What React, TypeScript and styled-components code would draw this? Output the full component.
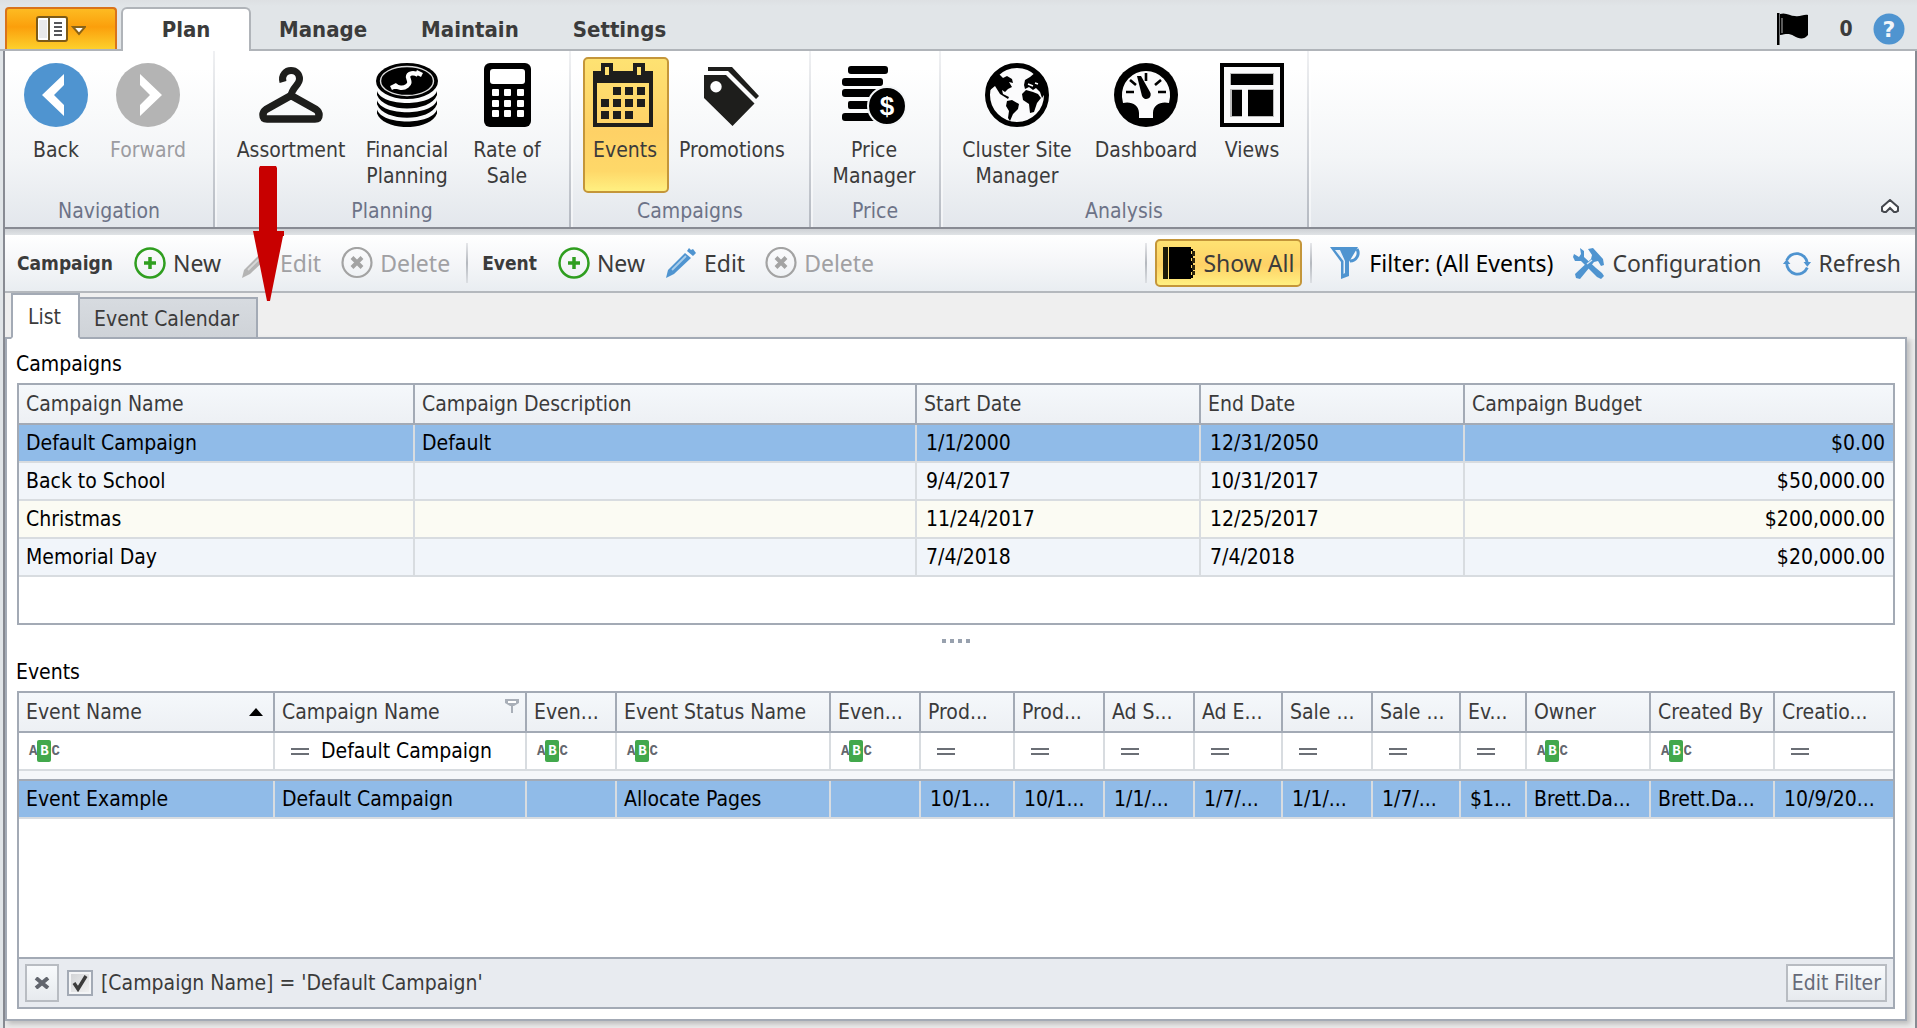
import React from "react";
import styled, { createGlobalStyle, css } from "styled-components";

const uiFont = `"DejaVu Sans Condensed", "DejaVu Sans", sans-serif`;
const barFont = `"Noto Sans", "Open Sans", sans-serif`;
const ink = "#3b3b3b";
const line = "#a3aab5";
const blue = "#4f94d0";
const edge = "#888b93";

const GlobalStyle = createGlobalStyle`
  * { box-sizing: border-box; }
  body { margin: 0; background: #e1e5e8; }
  button, input { font: inherit; color: inherit; margin: 0; }
  button { cursor: pointer; }
  svg { display: block; flex: none; }
`;

const Shell = styled.div`
  position: relative;
  display: flex;
  flex-direction: column;
  min-height: 100vh;
  font: 21px/26px ${uiFont};
  color: ${ink};
  white-space: nowrap;
`;

/* ---------- title row ---------- */

const TitleRow = styled.header`
  display: flex;
  align-items: flex-end;
  height: 51px;
  padding: 0 12px 0 5px;
  background: linear-gradient(#dde0e3, #e1e5e8 6px);
  box-shadow: inset 0 -2px #b0b4b9;
`;

const AppButton = styled.button`
  display: flex;
  align-items: center;
  justify-content: center;
  gap: 4px;
  width: 112px;
  height: 42px;
  margin: 0 4px 2px 0;
  padding: 0;
  border: 2px solid #d9731a;
  border-bottom: 0;
  border-radius: 4px 4px 0 0;
  background: linear-gradient(#fdbb22, #fb9f0b 45%, #fdd02c);
`;

const RibbonTabs = styled.nav`
  display: flex;
  flex: 1;
  gap: 2px;
`;

const RibbonTab = styled.button<{ $active?: boolean }>`
  height: 44px;
  padding: 2px 26px 0;
  border: 0;
  background: none;
  font-size: 22px;
  font-weight: bold;
  ${(p) =>
    p.$active &&
    css`
      min-width: 130px;
      padding-top: 0;
      border: 2px solid #b0b4b9;
      border-bottom: 0;
      border-radius: 6px 6px 0 0;
      background: #fff;
    `}
`;

const StatusArea = styled.div`
  display: flex;
  align-items: center;
  align-self: flex-start;
  padding-top: 13px;
`;

const StatusCount = styled.span`
  width: 64px;
  padding-left: 10px;
  text-align: center;
  font-weight: bold;
`;

const PlainButton = styled.button`
  padding: 0;
  border: 0;
  background: none;
`;

/* ---------- ribbon ---------- */

const Frame = styled.div`
  display: flex;
  flex-direction: column;
  flex: 1;
  margin-left: 3px;
  border: solid ${edge};
  border-width: 0 2px;
  background: #ebebeb;
`;

const RibbonBar = styled.div`
  display: flex;
  height: 178px;
  border-bottom: 2px solid ${edge};
  background: linear-gradient(#fff 10%, #f3f5f7 60%, #e3e7ec);
`;

const RibbonGroup = styled.section`
  display: flex;
  flex-direction: column;
  padding: 6px 12px 0;
  border-right: 2px solid;
  border-image: linear-gradient(#f0f1f3, #b4b9c1) 1;
  box-shadow: 2px 0 #ffffff80;
`;

const RibbonItems = styled.div`
  display: flex;
`;

const RibbonButton = styled.button<{ $width: number; $on?: boolean }>`
  display: flex;
  flex-direction: column;
  align-items: center;
  gap: 10px;
  width: ${(p) => p.$width}px;
  height: 136px;
  padding: 4px 2px 0 0;
  border: 2px solid transparent;
  border-radius: 5px;
  background: none;
  white-space: normal;
  line-height: 26px;
  &:disabled { color: #9c9ca1; }
  ${(p) =>
    p.$on &&
    css`
      border-color: #c4963a;
      background: linear-gradient(#fee272, #fed166 55%, #fed869 85%, #fff081);
    `}
`;

const GroupTitle = styled.h2`
  margin: 5px 0 0;
  font-size: 21px;
  font-weight: normal;
  line-height: 26px;
  text-align: center;
  color: #6d7387;
`;

const RibbonEnd = styled.div`
  display: flex;
  flex: 1;
  align-items: flex-end;
  justify-content: flex-end;
  padding: 0 16px 14px;
`;

/* ---------- tool bar ---------- */

const ToolBar = styled.div`
  display: flex;
  align-items: center;
  height: 64px;
  padding: 6px 4px 0 12px;
  border-bottom: 2px solid #b4b8bd;
  background: linear-gradient(#ced1d5, #e0e3e6 6px, #fff 6px, #f6f7f9 50%, #e9edf1);
  font-family: ${barFont};
  font-size: 23px;
`;

const ToolLabel = styled.span`
  padding-right: 11px;
  font-family: ${uiFont};
  font-size: 19px;
  font-weight: bold;
`;

const ToolButton = styled.button<{ $strong?: boolean; $on?: boolean }>`
  display: flex;
  align-items: center;
  gap: 7px;
  height: 48px;
  padding: 0 10px;
  border: 0;
  background: none;
  color: ${(p) => (p.$strong ? "#000" : ink)};
  &:disabled { color: #a0a0a3; }
  ${(p) =>
    p.$on &&
    css`
      padding: 0 6px;
      border: 2px solid #c4963a;
      border-radius: 5px;
      background: linear-gradient(#fee272, #fed166 55%, #fff081);
    `}
`;

const ToolSeparator = styled.span`
  width: 2px;
  height: 40px;
  margin: 0 14px 0 6px;
  background: linear-gradient(#e6e7ea, #b4b8be 50%, #dcdfe3);
`;

const ThinSeparator = styled(ToolSeparator)`
  margin: 0 8px;
`;

const Spacer = styled.span`
  flex: 1;
`;

/* ---------- page ---------- */

const PageTabs = styled.div`
  display: flex;
  align-items: flex-end;
  height: 46px;
  padding-left: 6px;
  background: #efefef;
`;

const PageTab = styled.button<{ $active?: boolean }>`
  position: relative;
  height: 42px;
  padding: 2px 17px 0 14px;
  border: 2px solid ${line};
  border-left: 0;
  background: linear-gradient(#d7dbe0, #cfd3d8);
  ${(p) =>
    p.$active &&
    css`
      z-index: 1;
      height: 46px;
      padding: 2px 17px 0 15px;
      border-left: 2px solid ${line};
      border-bottom-color: #fff;
      background: #fff;
    `}
`;

const Page = styled.main`
  display: flex;
  flex-direction: column;
  flex: 1;
  margin: -2px 8px 7px 0;
  padding: 12px 10px 10px;
  border: 2px solid ${line};
  background: #fff;
  box-shadow: 3px 3px 5px #00000033;
  color: #000;
`;

const SectionTitle = styled.h3`
  margin: 0 0 6px;
  font-size: 21px;
  font-weight: normal;
  line-height: 26px;
  text-indent: -1px;
`;

const GridBox = styled.div<{ $grow?: boolean }>`
  display: flex;
  flex-direction: column;
  min-height: 242px;
  flex: ${(p) => (p.$grow ? "1" : "none")};
  border: 2px solid ${line};
`;

const Splitter = styled.div`
  display: flex;
  justify-content: center;
  gap: 4px;
  height: 34px;
  padding-top: 14px;
`;

const SplitterDot = styled.i`
  width: 4px;
  height: 4px;
  background: #98a1ae;
`;

const Table = styled.table`
  width: 100%;
  table-layout: fixed;
  border-collapse: separate;
  border-spacing: 0;
`;

const HeadCell = styled.th`
  height: 40px;
  padding: 0 0 0 7px;
  border: solid ${line};
  border-width: 0 2px 2px 0;
  background: linear-gradient(#f5f8fb, #edf0f4);
  color: ${ink};
  font-weight: normal;
  text-align: left;
  overflow: hidden;
  &:last-child { border-right: 0; }
`;

const HeadInner = styled.span`
  display: flex;
  align-items: center;
  justify-content: space-between;
  height: 38px;
`;

const PinSlot = styled.span`
  align-self: flex-start;
  padding: 6px 6px 0 0;
`;

const SortSlot = styled.span`
  padding-right: 10px;
`;

const Row = styled.tr<{ $tone: "selected" | "cool" | "warm" }>`
  background: ${(p) => ({ selected: "#90bbe8", cool: "#f1f5fa", warm: "#fbfbf3" })[p.$tone]};
`;

const Cell = styled.td<{ $kind?: "date" | "money" }>`
  height: 38px;
  padding: 0 ${(p) => (p.$kind === "money" ? 8 : 0)}px 0 ${(p) => (p.$kind === "date" ? 9 : 7)}px;
  border: solid #d8dce0;
  border-width: 0 2px 2px 0;
  text-align: ${(p) => (p.$kind === "money" ? "right" : "left")};
  overflow: hidden;
  &:last-child { border-right: 0; }
`;

const FilterCell = styled.td`
  height: 38px;
  padding: 0;
  border: solid #d8dce0;
  border-width: 0 2px 2px 0;
  &:last-child { border-right: 0; }
`;

const FilterInner = styled.label<{ $kind: "text" | "equals" }>`
  display: flex;
  align-items: center;
  gap: 12px;
  height: 36px;
  padding-left: ${(p) => (p.$kind === "text" ? 10 : 16)}px;
`;

const FilterInput = styled.input`
  flex: 1;
  width: 0;
  min-width: 0;
  padding: 0;
  border: 0;
  outline: 0;
  background: none;
  color: #000;
`;

const BandCell = styled.td`
  height: 10px;
  padding: 0;
  border-bottom: 2px solid ${line};
  background: #f5f7fa;
`;

const AbcMark = styled.span`
  display: flex;
  align-items: center;
  font: bold 14px/22px "Liberation Mono", monospace;
  color: #63676e;
`;

const AbcBox = styled.b`
  width: 14px;
  height: 22px;
  border-radius: 2px;
  background: #42a84c;
  color: #fff;
  text-align: center;
`;

const EqualsMark = styled.span`
  width: 18px;
  height: 7px;
  flex: none;
  border: solid #6b6f76;
  border-width: 2px 0;
`;

const FilterFooter = styled.footer`
  display: flex;
  align-items: center;
  height: 50px;
  margin-top: auto;
  padding: 0 6px;
  border-top: 2px solid ${line};
  background: #e8ebf0;
  color: ${ink};
`;

const FooterButton = styled.button`
  display: flex;
  align-items: center;
  justify-content: center;
  min-width: 34px;
  height: 38px;
  padding: 0 4px;
  border: 2px solid #b8bcc2;
  background: linear-gradient(#f8fafc, #e7eaee);
  color: #666a78;
`;

const CheckLabel = styled.label`
  display: flex;
  flex: 1;
  align-items: center;
  gap: 8px;
  padding-left: 8px;
`;

const CheckBox = styled.input`
  appearance: none;
  width: 26px;
  height: 26px;
  border: 2px solid ${line};
  outline: 2px solid #f4f5f7;
  outline-offset: -4px;
  background: linear-gradient(135deg, #cfd1d4, #f4f4f4);
  &:checked {
    background:
      url("data:image/svg+xml,%3Csvg xmlns='http://www.w3.org/2000/svg' viewBox='0 0 22 22'%3E%3Cpath d='M5 11l4 6L17 4' fill='none' stroke='%233c3c3c' stroke-width='3.4'/%3E%3C/svg%3E"),
      linear-gradient(135deg, #cfd1d4, #f4f4f4);
  }
`;

const ArrowOverlay = styled.svg`
  position: absolute;
  left: 253px;
  top: 166px;
  pointer-events: none;
`;

/* ---------- icons ---------- */

const MenuIcon = () => (
  <svg width="50" height="26" viewBox="0 0 50 26">
    <rect x="1" y="1" width="30" height="24" rx="2" fill="#fff" stroke="#7d5a17" strokeWidth="2" />
    <rect x="3" y="4" width="8" height="18" fill="#e9eaec" />
    <path d="M13 1v24" stroke="#6b5a33" strokeWidth="2" />
    <path d="M18 7h8M18 11h8M18 15h8M18 19h8" stroke="#55565a" strokeWidth="2" />
    <path d="M37 11h12l-6 7z" fill="#fff" stroke="#8a6418" strokeWidth="2" />
  </svg>
);

const NavIcon = ({ forward }: { forward?: boolean }) => (
  <svg width="64" height="64" viewBox="0 0 64 64">
    <circle cx="32" cy="32" r="32" fill={forward ? "#b4b4b4" : blue} />
    <path
      d={forward ? "M24 11L46 32L24 53V42L34 32L24 22Z" : "M40 11L18 32L40 53V42L30 32L40 22Z"}
      fill="#fff"
    />
  </svg>
);

const HangerIcon = () => (
  <svg width="64" height="64" viewBox="0 0 64 64" fill="none" stroke="#1e1e1c">
    <path d="M24 19C22 12 27 7.500 32 7.500C37 7.500 40.500 11 40.500 16C40.500 22 33 24 32 33" strokeWidth="7" />
    <path
      d="M32 32.500L7 46.500Q4 48.500 4 52Q4 56 8 56H56Q60 56 60 52Q60 48.500 57 46.500Z"
      strokeWidth="7.500"
      strokeLinejoin="round"
    />
  </svg>
);

const CoinsIcon = () => (
  <svg width="62" height="64" viewBox="0 0 62 64">
    {[0, 9.3, 18.6].map((y) => (
      <path
        key={y}
        transform={`translate(0 ${y})`}
        d="M1 28C6 44 56 44 61 28V32C54 50 8 50 1 32Z"
      />
    ))}
    <ellipse cx="31" cy="18" rx="31" ry="18" />
    <ellipse cx="31" cy="18" rx="26.500" ry="14.500" fill="none" stroke="#ddd" strokeWidth="1.400" />
    <path
      d="M42 12C38 9 32 10 32 14C33 18 35 20 31 23C27 26 22 25 19 22M40 9L46 12M15 25L21 22"
      fill="none"
      stroke="#fff"
      strokeWidth="4.400"
    />
  </svg>
);

const CalculatorIcon = () => (
  <svg width="47" height="64" viewBox="0 0 47 64">
    <rect width="47" height="64" rx="6" />
    <rect x="6" y="6" width="35" height="15" rx="3" fill="#fff" />
    {[26, 37, 47].map((y) =>
      [8, 20, 33].map((x) => <rect key={`${x}-${y}`} x={x} y={y} width="7" height="7" rx="1" fill="#fff" />)
    )}
  </svg>
);

const CalendarIcon = () => (
  <svg width="64" height="64" viewBox="0 0 64 64" fill="#1e1e1c">
    <path d="M0 8H8V0H20V8H40V0H52V8H60V64H0ZM4 20V60H56V20ZM12 4V12H16V4ZM44 4V12H48V4Z" fillRule="evenodd" />
    <path d="M20 24h8v8h-8zM32 24h8v8h-8zM44 24h8v8h-8zM8 36h8v8H8zM20 36h8v8h-8zM32 36h8v8h-8zM44 36h8v8h-8zM8 48h8v8H8zM20 48h8v8h-8zM32 48h8v8h-8z" />
  </svg>
);

const TagIcon = () => (
  <svg width="56" height="64" viewBox="0 0 56 64" fill="#1e1e1c">
    <path d="M0 12H22L50.500 40.500L28.500 63L0 35ZM12 18A5.700 5.700 0 1 0 12 29.400A5.700 5.700 0 1 0 12 18Z" fillRule="evenodd" />
    <path d="M4 4H28L55 33L52 36L24 8H4Z" />
  </svg>
);

const PriceIcon = () => (
  <svg width="64" height="64" viewBox="0 0 64 64">
    <rect x="6" y="3" width="40" height="8" rx="3" />
    <rect x="0" y="15" width="41" height="8" rx="3" />
    <rect x="0" y="26" width="36" height="8" rx="3" />
    <rect x="6" y="38" width="24" height="8" rx="2" />
    <rect x="0" y="50" width="34" height="8" rx="3" />
    <circle cx="45" cy="43" r="19" stroke="#f3f5f7" strokeWidth="2" />
    <text x="45" y="52" textAnchor="middle" fontFamily="Liberation Sans, sans-serif" fontWeight="bold" fontSize="26" fill="#fff">
      $
    </text>
  </svg>
);

const GlobeIcon = () => (
  <svg width="64" height="64" viewBox="0 0 64 64">
    <circle cx="32" cy="32" r="29.500" fill="#fbfbfc" stroke="#000" strokeWidth="5" />
    <path d="M8 17L14 11L18 15L22 13L27 16L28 20L24 19L27 24L23 26L20 29L17 27L18 31L24 34L23 36L15 31L10 23L4 28Z" />
    <path d="M22 38L27 37L34 41L33 46L28 51L25 58L23 55L24 48L21 43Z" />
    <path d="M40 17L45 14L51 9L58 17L61 29L57 35L55 29L51 25L48 27L44 24L40 26L39 22Z" />
    <path d="M37 31L41 27L48 29L53 31L56 35L52 40L49 49L45 50L44 41L38 37Z" />
    <path d="M34 17l2-1M43 21l5 2M50 20l3 1" stroke="#fff" strokeWidth="1.500" />
  </svg>
);

const GaugeIcon = () => (
  <svg width="64" height="64" viewBox="0 0 64 64">
    <circle cx="32" cy="32" r="32" />
    <path d="M32 8A24 24 0 0 0 8 34L9 40C17 38 25 42 25 50V55H39V50C39 42 47 38 55 40L56 34A24 24 0 0 0 32 8Z" fill="#fbfbfc" />
    <path d="M32 10V18M12 29H20M44 29H52M16 17L22 22M47 17L41 22" stroke="#000" strokeWidth="2.600" />
    <path d="M23 13L27 13L36 29A4.500 4.500 0 1 1 28 33Z" />
  </svg>
);

const ViewsIcon = () => (
  <svg width="64" height="64" viewBox="0 0 64 64">
    <rect x="2" y="2" width="60" height="60" fill="#fafafb" stroke="#000" strokeWidth="4" />
    <path d="M10 10H54V54H28V26H54V22H10V26H22V54H10Z" fill="#bbb" />
    <path d="M11 11H53V22H11ZM12 27H22V53H12ZM28 27H53V53H28Z" />
  </svg>
);

const FlagIcon = () => (
  <svg width="32" height="32" viewBox="0 0 32 32">
    <path d="M1 0V32" stroke="#000" strokeWidth="3" />
    <path d="M3 1C9-1 13 3 18 3C23 4 27 1 31 2V22C27 27 22 26 17 23C12 20 9 21 3 22Z" />
    <path d="M5 5V20" stroke="#999" strokeWidth="1.200" />
  </svg>
);

const HelpIcon = () => (
  <svg width="32" height="32" viewBox="0 0 32 32">
    <circle cx="16" cy="16" r="15.500" fill={blue} />
    <text x="16" y="24" textAnchor="middle" fontFamily="DejaVu Sans, sans-serif" fontWeight="bold" fontSize="22" fill="#f2f6fa">
      ?
    </text>
  </svg>
);

const CollapseIcon = () => (
  <svg width="18" height="14" viewBox="0 0 18 14">
    <path d="M9 1L17 8V12L15 13H13L9 9L5 13H3L1 12V8Z" fill="#fff" stroke="#45484e" strokeWidth="2" />
  </svg>
);

const AddIcon = () => (
  <svg width="32" height="32" viewBox="0 0 32 32" fill="none" stroke="#2f9e1f">
    <circle cx="16" cy="16" r="14.500" strokeWidth="2.500" />
    <path d="M16 10V22M10 16H22" strokeWidth="3.500" />
  </svg>
);

const DeleteIcon = () => (
  <svg width="32" height="32" viewBox="0 0 32 32" fill="none" stroke="#a3a3a3">
    <circle cx="16" cy="15.500" r="14.500" strokeWidth="2.200" />
    <path d="M11 10.500L21 20.500M21 10.500L11 20.500" strokeWidth="4" />
  </svg>
);

const PencilIcon = ({ off }: { off?: boolean }) => (
  <svg width="32" height="32" viewBox="0 0 32 32" fill={off ? "#b4b4b4" : blue}>
    <path d="M1 31L3 23L20 6L26 11L9 27Z" />
    <path d="M22 4L24 1L26 3L28 2L31 6L28 9Z" />
    <path d="M7 23L21 9" stroke={off ? "#d8d8d8" : "#a9cdea"} strokeWidth="1.800" />
  </svg>
);

const NotebookIcon = () => (
  <svg width="33" height="32" viewBox="0 0 33 32">
    <rect width="5" height="32" fill="#1d1a08" />
    <rect x="6" width="22" height="32" />
    <path d="M28 2h2v2h-2zM28 7h2v4h-2zM28 14h2v4h-2zM28 21h2v4h-2zM28 28h2v3h-2z" />
    <path d="M30.500 4v5M30.500 11v5M30.500 18v5M30.500 24v4" stroke="#2b240c" strokeWidth="3" />
  </svg>
);

const FunnelIcon = () => (
  <svg width="32" height="32" viewBox="0 0 32 32">
    <path d="M0 0H28L19 15V29L11 32V15Z" fill={blue} />
    <path d="M5 3H10L15 14V26L13.500 27V14Z" fill="#e9f2fa" />
    <path d="M27 2A8 8 0 0 1 20 14" fill="none" stroke={blue} strokeWidth="3" />
  </svg>
);

const ToolsIcon = () => (
  <svg width="32" height="32" viewBox="0 0 32 32" fill={blue}>
    <path d="M7 1L11 4V10L23 21L29 26L31 29L28 32L24 30L8 14L2 14L0 10L1 7L6 10L8 7Z" />
    <path d="M15 2L20 1L30 12L31 18L28 19L25 14L21 15L7 32L3 31L2 27L18 12L19 8Z" />
    <path d="M14 17L19 13" stroke="#dceaf6" strokeWidth="1.500" />
  </svg>
);

const RefreshIcon = () => (
  <svg width="30" height="32" viewBox="0 0 32 32" fill="none" stroke={blue} strokeWidth="3">
    <path d="M5 13A11.500 11.500 0 0 1 27 16M27 21A11.500 11.500 0 0 1 5 16" />
    <path d="M23 15H31L27 20ZM1 17H9L5 12Z" fill={blue} stroke="none" />
  </svg>
);

const PinIcon = () => (
  <svg width="14" height="14" viewBox="0 0 14 14">
    <path d="M0 0H14V4L9 7H5L0 4Z" fill="#a9afb8" />
    <path d="M3 3H11" stroke="#fff" strokeWidth="2" />
    <path d="M7 6V14" stroke="#a9afb8" strokeWidth="2" />
  </svg>
);

const SortIcon = () => (
  <svg width="14" height="8" viewBox="0 0 14 8">
    <path d="M7 0L14 8H0Z" />
  </svg>
);

const CloseIcon = () => (
  <svg width="16" height="12" viewBox="0 0 16 12">
    <path d="M2 1L14 11M14 1L2 11" stroke="#62666e" strokeWidth="4" />
  </svg>
);

/* ---------- data ---------- */

type RibbonItem = { label: string; width: number; icon: React.ReactNode; on?: boolean; off?: boolean };

const ribbon: { title: string; items: RibbonItem[] }[] = [
  {
    title: "Navigation",
    items: [
      { label: "Back", width: 80, icon: <NavIcon /> },
      { label: "Forward", width: 104, icon: <NavIcon forward />, off: true },
    ],
  },
  {
    title: "Planning",
    items: [
      { label: "Assortment", width: 130, icon: <HangerIcon /> },
      { label: "Financial Planning", width: 102, icon: <CoinsIcon /> },
      { label: "Rate of Sale", width: 98, icon: <CalculatorIcon /> },
    ],
  },
  {
    title: "Campaigns",
    items: [
      { label: "Events", width: 86, icon: <CalendarIcon />, on: true },
      { label: "Promotions", width: 128, icon: <TagIcon /> },
    ],
  },
  { title: "Price", items: [{ label: "Price Manager", width: 104, icon: <PriceIcon /> }] },
  {
    title: "Analysis",
    items: [
      { label: "Cluster Site Manager", width: 130, icon: <GlobeIcon /> },
      { label: "Dashboard", width: 128, icon: <GaugeIcon /> },
      { label: "Views", width: 84, icon: <ViewsIcon /> },
    ],
  },
];

const campaignColumns: [string, number][] = [
  ["Campaign Name", 396],
  ["Campaign Description", 502],
  ["Start Date", 284],
  ["End Date", 264],
  ["Campaign Budget", 428],
];

const campaigns = [
  ["Default Campaign", "Default", "1/1/2000", "12/31/2050", "$0.00"],
  ["Back to School", "", "9/4/2017", "10/31/2017", "$50,000.00"],
  ["Christmas", "", "11/24/2017", "12/25/2017", "$200,000.00"],
  ["Memorial Day", "", "7/4/2018", "7/4/2018", "$20,000.00"],
];

type EventColumn = { title: string; width: number; filter: "text" | "equals"; value: string; query?: string };

const eventColumns: EventColumn[] = [
  { title: "Event Name", width: 256, filter: "text", value: "Event Example" },
  { title: "Campaign Name", width: 252, filter: "equals", value: "Default Campaign", query: "Default Campaign" },
  { title: "Even...", width: 90, filter: "text", value: "" },
  { title: "Event Status Name", width: 214, filter: "text", value: "Allocate Pages" },
  { title: "Even...", width: 90, filter: "text", value: "" },
  { title: "Prod...", width: 94, filter: "equals", value: "10/1..." },
  { title: "Prod...", width: 90, filter: "equals", value: "10/1..." },
  { title: "Ad S...", width: 90, filter: "equals", value: "1/1/..." },
  { title: "Ad E...", width: 88, filter: "equals", value: "1/7/..." },
  { title: "Sale ...", width: 90, filter: "equals", value: "1/1/..." },
  { title: "Sale ...", width: 88, filter: "equals", value: "1/7/..." },
  { title: "Ev...", width: 66, filter: "equals", value: "$1..." },
  { title: "Owner", width: 124, filter: "text", value: "Brett.Da..." },
  { title: "Created By", width: 124, filter: "text", value: "Brett.Da..." },
  { title: "Creatio...", width: 118, filter: "equals", value: "10/9/20..." },
];

/* ---------- parts ---------- */

const CampaignGrid = () => (
  <GridBox>
    <Table>
      <colgroup>
        {campaignColumns.map(([name, width]) => (
          <col key={name} width={width} />
        ))}
      </colgroup>
      <thead>
        <tr>
          {campaignColumns.map(([name]) => (
            <HeadCell key={name}>{name}</HeadCell>
          ))}
        </tr>
      </thead>
      <tbody>
        {campaigns.map((row, r) => (
          <Row key={row[0]} $tone={r === 0 ? "selected" : r % 2 ? "cool" : "warm"}>
            {row.map((value, c) => (
              <Cell key={c} $kind={c === 4 ? "money" : c > 1 ? "date" : undefined}>
                {value}
              </Cell>
            ))}
          </Row>
        ))}
      </tbody>
    </Table>
  </GridBox>
);

const EventGrid = () => (
  <GridBox $grow>
    <Table>
      <colgroup>
        {eventColumns.map((c, i) => (
          <col key={i} width={c.width} />
        ))}
      </colgroup>
      <thead>
        <tr>
          {eventColumns.map((c, i) => (
            <HeadCell key={i}>
              <HeadInner>
                {c.title}
                {i === 0 && <SortSlot><SortIcon /></SortSlot>}
                {i === 1 && <PinSlot><PinIcon /></PinSlot>}
              </HeadInner>
            </HeadCell>
          ))}
        </tr>
      </thead>
      <tbody>
        <tr>
          {eventColumns.map((c, i) => (
            <FilterCell key={i}>
              <FilterInner $kind={c.filter}>
                {c.filter === "text" ? (
                  <AbcMark>
                    A<AbcBox>B</AbcBox>C
                  </AbcMark>
                ) : (
                  <EqualsMark />
                )}
                <FilterInput type="text" aria-label={c.title} defaultValue={c.query ?? ""} />
              </FilterInner>
            </FilterCell>
          ))}
        </tr>
        <tr>
          <BandCell colSpan={eventColumns.length} />
        </tr>
        <Row $tone="selected">
          {eventColumns.map((c, i) => (
            <Cell key={i} $kind={c.filter === "equals" && i > 1 ? "date" : undefined}>
              {c.value}
            </Cell>
          ))}
        </Row>
      </tbody>
    </Table>
    <FilterFooter>
      <FooterButton type="button" aria-label="Close">
        <CloseIcon />
      </FooterButton>
      <CheckLabel>
        <CheckBox type="checkbox" defaultChecked />
        [Campaign Name] = 'Default Campaign'
      </CheckLabel>
      <FooterButton type="button">Edit Filter</FooterButton>
    </FilterFooter>
  </GridBox>
);

export default function App() {
  return (
    <Shell>
      <GlobalStyle />
      <TitleRow>
        <AppButton type="button" aria-label="Menu">
          <MenuIcon />
        </AppButton>
        <RibbonTabs>
          <RibbonTab type="button" $active>Plan</RibbonTab>
          <RibbonTab type="button">Manage</RibbonTab>
          <RibbonTab type="button">Maintain</RibbonTab>
          <RibbonTab type="button">Settings</RibbonTab>
        </RibbonTabs>
        <StatusArea>
          <FlagIcon />
          <StatusCount>0</StatusCount>
          <PlainButton type="button" aria-label="Help">
            <HelpIcon />
          </PlainButton>
        </StatusArea>
      </TitleRow>

      <Frame>
        <RibbonBar>
          {ribbon.map((group) => (
            <RibbonGroup key={group.title}>
              <RibbonItems>
                {group.items.map((item) => (
                  <RibbonButton key={item.label} type="button" $width={item.width} $on={item.on} disabled={item.off}>
                    {item.icon}
                    {item.label}
                  </RibbonButton>
                ))}
              </RibbonItems>
              <GroupTitle>{group.title}</GroupTitle>
            </RibbonGroup>
          ))}
          <RibbonEnd>
            <PlainButton type="button" aria-label="Collapse">
              <CollapseIcon />
            </PlainButton>
          </RibbonEnd>
        </RibbonBar>

        <ToolBar>
          <ToolLabel>Campaign</ToolLabel>
          <ToolButton type="button"><AddIcon />New</ToolButton>
          <ToolButton type="button" disabled><PencilIcon off />Edit</ToolButton>
          <ToolButton type="button" disabled><DeleteIcon />Delete</ToolButton>
          <ToolSeparator />
          <ToolLabel>Event</ToolLabel>
          <ToolButton type="button"><AddIcon />New</ToolButton>
          <ToolButton type="button"><PencilIcon />Edit</ToolButton>
          <ToolButton type="button" disabled><DeleteIcon />Delete</ToolButton>
          <Spacer />
          <ThinSeparator />
          <ToolButton type="button" $on><NotebookIcon />Show All</ToolButton>
          <ThinSeparator />
          <ToolButton type="button" $strong><FunnelIcon />Filter: (All Events)</ToolButton>
          <ToolButton type="button"><ToolsIcon />Configuration</ToolButton>
          <ToolButton type="button"><RefreshIcon />Refresh</ToolButton>
        </ToolBar>

        <PageTabs>
          <PageTab type="button" $active>List</PageTab>
          <PageTab type="button">Event Calendar</PageTab>
        </PageTabs>

        <Page>
          <SectionTitle>Campaigns</SectionTitle>
          <CampaignGrid />
          <Splitter>
            <SplitterDot />
            <SplitterDot />
            <SplitterDot />
            <SplitterDot />
          </Splitter>
          <SectionTitle>Events</SectionTitle>
          <EventGrid />
        </Page>
      </Frame>

      <ArrowOverlay width="32" height="136" viewBox="0 0 32 136" fill="#c80000">
        <path d="M7 0H23L24 2V65H31V70H30L17 135H14L1 70L0 65H6V2Z" />
      </ArrowOverlay>
    </Shell>
  );
}
